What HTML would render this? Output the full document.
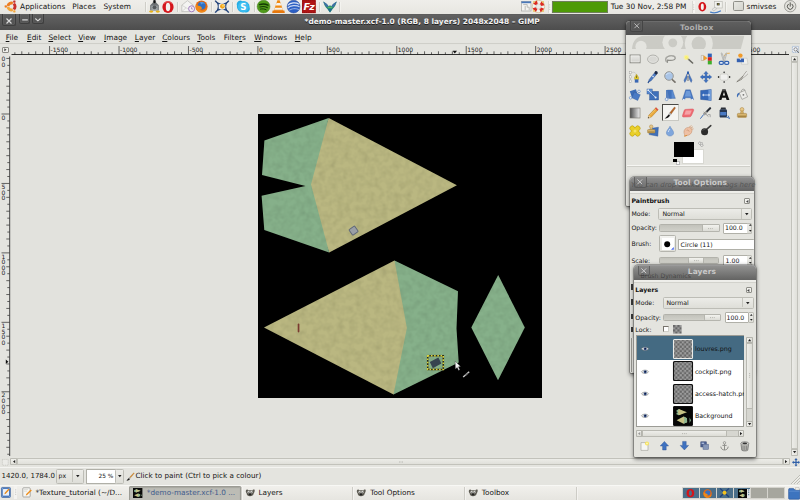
<!DOCTYPE html><html><head><meta charset="utf-8"><title>GIMP</title><style>
*{box-sizing:border-box;margin:0;padding:0}
html,body{width:800px;height:500px;overflow:hidden;background:#e3e3de}
body{font-family:"DejaVu Sans","Liberation Sans",sans-serif;font-size:7.4px;color:#141414;position:relative;line-height:1}
.a{position:absolute}
.t{position:absolute;white-space:pre;line-height:10px;height:10px}
u{text-decoration:underline;text-decoration-thickness:.6px;text-underline-offset:.8px}
svg{position:absolute;overflow:visible}
#panel{left:0;top:0;width:800px;height:14px;background:linear-gradient(#efeeea,#e7e6e1)}
#title{left:0;top:13.4px;width:800px;height:16.6px;background:linear-gradient(#33332f 0,#3a3a3a .8px,#626262 1.6px,#4d4d4d 100%)}
#menubar{left:0;top:30px;width:800px;height:14px;background:#e4e4df;border-bottom:1px solid #cfcfc9}
#canvasbg{left:10px;top:55px;width:780px;height:401px;background:#e2e2dd}
.win{position:absolute;background:#e4e4df;box-shadow:0 1.5px 4px rgba(0,0,0,.6),0 0 0 .5px rgba(60,60,60,.6);border-radius:4px 4px 1px 1px}
.wtitle{position:absolute;left:0;top:0;right:0;background:linear-gradient(#707070,#4c4c4c);border-radius:4px 4px 0 0;border-top:.5px solid #8a8a8a}
.wx{position:absolute;border:.7px solid #3e3e3e;border-radius:2px;background:linear-gradient(#5c5c5c,#535353);box-shadow:inset 0 0 0 .5px rgba(255,255,255,.08)}
.combo{position:absolute;background:linear-gradient(#ecece8,#deded8);border:.6px solid #bdbdb6;border-radius:1.5px}
.entry{position:absolute;background:#fff;border:.6px solid #b0b0a8;border-radius:1px}
.slider{position:absolute;background:linear-gradient(#c2c2bb,#d0d0c9);border:.6px solid #b2b2ab;border-radius:1.5px}
.knob{position:absolute;background:linear-gradient(#f2f2ee,#dcdcd6);border:.6px solid #b5b5ae;border-radius:1.5px}
.chk{background:conic-gradient(#6a6a6a 25%,#9c9c9c 0 50%,#6a6a6a 0 75%,#9c9c9c 0) 0 0/4.4px 4.4px}
</style></head><body>
<div class="a" id="canvasbg"></div>
<svg style="left:0px;top:0px" width="800" height="500" viewBox="0 0 800 500">
<rect x="258" y="114" width="284" height="284" fill="#000"/>
<defs><filter id="tx" x="0" y="0" width="100%" height="100%"><feTurbulence type="fractalNoise" baseFrequency=".16" numOctaves="2" seed="4" result="n"/><feColorMatrix in="n" type="matrix" values="0 0 0 0 0 0 0 0 0 0 0 0 0 0 0 .22 .22 0 0 -.17" result="a"/><feComposite in="a" in2="SourceGraphic" operator="in" result="m"/><feMerge><feMergeNode in="SourceGraphic"/><feMergeNode in="m"/></feMerge></filter></defs><g filter="url(#tx)">
<polygon points="328.7,118 456.9,185.3 329.2,252.6 307,194 307,178" fill="#bab781"/>
<polygon points="328.7,118 264.4,140.6 262,175 305.5,186.1 261.6,195.8 264.3,230 329.2,252.6 311,184.6" fill="#86b08a"/>
<polygon points="394.5,260.5 264,327.5 393.5,394.5 420,360 420,300" fill="#bab781"/>
<polygon points="394.5,260.5 458,291.2 456.5,328.6 458.7,362.5 393.5,394.5 406.9,328" fill="#86b08a"/>
<polygon points="498.2,275 524.8,327.6 498,380.2 471.3,327.6" fill="#86b08a"/>
</g>
<rect x="350.2" y="227.2" width="6.8" height="6.8" rx=".8" fill="#9a9fa6" stroke="#5f6878" stroke-width="1" transform="rotate(-35 353.6 230.6)"/>
<rect x="297.7" y="323.6" width="1.7" height="8.8" rx=".8" fill="#7a3a30"/>
<rect x="427.7" y="355.7" width="15.6" height="13.8" fill="none" stroke="#2a2a18" stroke-width="1.5"/>
<rect x="427.7" y="355.7" width="15.6" height="13.8" fill="none" stroke="#d8d23a" stroke-width="1.5" stroke-dasharray="1.6 1.6"/>
<polygon points="429.8,362 438.4,357.4 441.4,363.6 432.8,368.2" fill="#36434f"/>
<path d="M455.2 361.2L455.4 369L457.2 367.4L458.6 370.4L459.8 369.8L458.4 366.8L460.6 366.6Z" fill="#f4f4f4" stroke="#222" stroke-width=".3"/>
<path d="M463.2 377L469.2 371.8" stroke="#c8c8c8" stroke-width="1.5"/><path d="M465.4 375.2L467.6 373.2" stroke="#777" stroke-width="1.5"/>
</svg>
<div class="a" id="title"></div>
<div class="wx" style="left:2.4px;top:14.3px;width:13.4px;height:11.9px;border-top:none;border-radius:0 0 2.5px 2.5px"></div>
<svg style="left:6px;top:17.9px" width="6" height="6" viewBox="0 0 6 6"><path d="M.5 .5L5.5 5.5M5.5 .5L.5 5.5" stroke="#dcdcdc" stroke-width="1.15" fill="none"/></svg>
<div class="wx" style="left:19.2px;top:14.3px;width:11.3px;height:9.3px;border-top:none;border-radius:0 0 2.5px 2.5px"></div>
<div class="wx" style="left:32.4px;top:14.3px;width:11.9px;height:9.3px;border-top:none;border-radius:0 0 2.5px 2.5px"></div>
<svg style="left:22px;top:18.6px" width="6" height="2" viewBox="0 0 6 2"><path d="M.2 .9H5.8" stroke="#dcdcdc" stroke-width="1.2"/></svg>
<svg style="left:35.4px;top:17.8px" width="6" height="4" viewBox="0 0 6 4"><path d="M.3 .5L2.9 2.8L5.5 .5" stroke="#dcdcdc" stroke-width="1.1" fill="none"/></svg>
<div class="t" style="left:304.5px;top:17.1px;font-size:7.46px;color:#f2f2f2;font-weight:bold;text-shadow:0 .5px 0 #222;">*demo-master.xcf-1.0 (RGB, 8 layers) 2048x2048 – GIMP</div>
<div class="a" id="menubar"></div>
<div class="t" style="left:5.7px;top:32.8px;font-size:7.4px;"><u>F</u>ile</div>
<div class="t" style="left:27.0px;top:32.8px;font-size:7.4px;"><u>E</u>dit</div>
<div class="t" style="left:48.4px;top:32.8px;font-size:7.4px;"><u>S</u>elect</div>
<div class="t" style="left:78.2px;top:32.8px;font-size:7.4px;"><u>V</u>iew</div>
<div class="t" style="left:104.0px;top:32.8px;font-size:7.4px;"><u>I</u>mage</div>
<div class="t" style="left:134.8px;top:32.8px;font-size:7.4px;"><u>L</u>ayer</div>
<div class="t" style="left:162.20000000000002px;top:32.8px;font-size:7.4px;"><u>C</u>olours</div>
<div class="t" style="left:197.20000000000002px;top:32.8px;font-size:7.4px;"><u>T</u>ools</div>
<div class="t" style="left:223.8px;top:32.8px;font-size:7.4px;">Filte<u>r</u>s</div>
<div class="t" style="left:254.20000000000002px;top:32.8px;font-size:7.4px;"><u>W</u>indows</div>
<div class="t" style="left:294.79999999999995px;top:32.8px;font-size:7.4px;"><u>H</u>elp</div>
<div class="a" style="left:0px;top:44.5px;width:800px;height:10.5px;background:#e4e4df"></div>
<div class="a" style="left:0px;top:55px;width:10px;height:401px;background:#e4e4df"></div>
<div class="a" style="left:1.5px;top:46.5px;width:7px;height:6.5px;border:.6px solid #8a8a84;border-radius:1px;background:#eeeeea"></div>
<svg style="left:3.6px;top:48px" width="3" height="4" viewBox="0 0 3 4"><path d="M.3 .3L2.6 1.8L.3 3.3Z" fill="#444"/></svg>
<svg style="left:0px;top:0px" width="800" height="500" viewBox="0 0 800 500"><path d="M11.5 54.5H789" stroke="#1a1a1a" stroke-width=".9"/><path d="M14.86 54.5v-2.2M21.80 54.5v-3.2M28.75 54.5v-2.2M35.69 54.5v-3.2M42.64 54.5v-2.2M49.58 54.5v-8.5M56.52 54.5v-2.2M63.47 54.5v-3.2M70.41 54.5v-2.2M77.36 54.5v-3.2M84.30 54.5v-2.2M91.24 54.5v-3.2M98.19 54.5v-2.2M105.13 54.5v-3.2M112.08 54.5v-2.2M119.02 54.5v-8.5M125.96 54.5v-2.2M132.91 54.5v-3.2M139.85 54.5v-2.2M146.80 54.5v-3.2M153.74 54.5v-2.2M160.68 54.5v-3.2M167.63 54.5v-2.2M174.57 54.5v-3.2M181.52 54.5v-2.2M188.46 54.5v-8.5M195.40 54.5v-2.2M202.35 54.5v-3.2M209.29 54.5v-2.2M216.24 54.5v-3.2M223.18 54.5v-2.2M230.12 54.5v-3.2M237.07 54.5v-2.2M244.01 54.5v-3.2M250.96 54.5v-2.2M257.90 54.5v-8.5M264.84 54.5v-2.2M271.79 54.5v-3.2M278.73 54.5v-2.2M285.68 54.5v-3.2M292.62 54.5v-2.2M299.56 54.5v-3.2M306.51 54.5v-2.2M313.45 54.5v-3.2M320.40 54.5v-2.2M327.34 54.5v-8.5M334.28 54.5v-2.2M341.23 54.5v-3.2M348.17 54.5v-2.2M355.12 54.5v-3.2M362.06 54.5v-2.2M369.00 54.5v-3.2M375.95 54.5v-2.2M382.89 54.5v-3.2M389.84 54.5v-2.2M396.78 54.5v-8.5M403.72 54.5v-2.2M410.67 54.5v-3.2M417.61 54.5v-2.2M424.56 54.5v-3.2M431.50 54.5v-2.2M438.44 54.5v-3.2M445.39 54.5v-2.2M452.33 54.5v-3.2M459.28 54.5v-2.2M466.22 54.5v-8.5M473.16 54.5v-2.2M480.11 54.5v-3.2M487.05 54.5v-2.2M494.00 54.5v-3.2M500.94 54.5v-2.2M507.88 54.5v-3.2M514.83 54.5v-2.2M521.77 54.5v-3.2M528.72 54.5v-2.2M535.66 54.5v-8.5M542.60 54.5v-2.2M549.55 54.5v-3.2M556.49 54.5v-2.2M563.44 54.5v-3.2M570.38 54.5v-2.2M577.32 54.5v-3.2M584.27 54.5v-2.2M591.21 54.5v-3.2M598.16 54.5v-2.2M605.10 54.5v-8.5M612.04 54.5v-2.2M618.99 54.5v-3.2M625.93 54.5v-2.2M632.88 54.5v-3.2M639.82 54.5v-2.2M646.76 54.5v-3.2M653.71 54.5v-2.2M660.65 54.5v-3.2M667.60 54.5v-2.2M674.54 54.5v-8.5M681.48 54.5v-2.2M688.43 54.5v-3.2M695.37 54.5v-2.2M702.32 54.5v-3.2M709.26 54.5v-2.2M716.20 54.5v-3.2M723.15 54.5v-2.2M730.09 54.5v-3.2M737.04 54.5v-2.2M743.98 54.5v-8.5M750.92 54.5v-2.2M757.87 54.5v-3.2M764.81 54.5v-2.2M771.76 54.5v-3.2M778.70 54.5v-2.2M785.64 54.5v-3.2" stroke="#1a1a1a" stroke-width=".65" fill="none"/><text x="50.6" y="51.8" font-size="6" fill="#1a1a1a">-1500</text><text x="120.0" y="51.8" font-size="6" fill="#1a1a1a">-1000</text><text x="189.5" y="51.8" font-size="6" fill="#1a1a1a">-500</text><text x="258.9" y="51.8" font-size="6" fill="#1a1a1a">0</text><text x="328.3" y="51.8" font-size="6" fill="#1a1a1a">500</text><text x="397.8" y="51.8" font-size="6" fill="#1a1a1a">1000</text><text x="467.2" y="51.8" font-size="6" fill="#1a1a1a">1500</text><text x="536.7" y="51.8" font-size="6" fill="#1a1a1a">2000</text><text x="606.1" y="51.8" font-size="6" fill="#1a1a1a">2500</text><text x="675.5" y="51.8" font-size="6" fill="#1a1a1a">3000</text><text x="745.0" y="51.8" font-size="6" fill="#1a1a1a">3500</text><path d="M452.6 50.8h4.4l-2.2 2.6z" fill="#111"/><path d="M9.7 56.5V456" stroke="#1a1a1a" stroke-width=".8"/><path d="M9.5 58.45h-3.2M9.5 65.39h-2.2M9.5 72.34h-3.2M9.5 79.28h-2.2M9.5 86.22h-3.2M9.5 93.17h-2.2M9.5 100.11h-3.2M9.5 107.06h-2.2M9.5 114.00h-8M9.5 120.94h-2.2M9.5 127.89h-3.2M9.5 134.83h-2.2M9.5 141.78h-3.2M9.5 148.72h-2.2M9.5 155.66h-3.2M9.5 162.61h-2.2M9.5 169.55h-3.2M9.5 176.50h-2.2M9.5 183.44h-8M9.5 190.38h-2.2M9.5 197.33h-3.2M9.5 204.27h-2.2M9.5 211.22h-3.2M9.5 218.16h-2.2M9.5 225.10h-3.2M9.5 232.05h-2.2M9.5 238.99h-3.2M9.5 245.94h-2.2M9.5 252.88h-8M9.5 259.82h-2.2M9.5 266.77h-3.2M9.5 273.71h-2.2M9.5 280.66h-3.2M9.5 287.60h-2.2M9.5 294.54h-3.2M9.5 301.49h-2.2M9.5 308.43h-3.2M9.5 315.38h-2.2M9.5 322.32h-8M9.5 329.26h-2.2M9.5 336.21h-3.2M9.5 343.15h-2.2M9.5 350.10h-3.2M9.5 357.04h-2.2M9.5 363.98h-3.2M9.5 370.93h-2.2M9.5 377.87h-3.2M9.5 384.82h-2.2M9.5 391.76h-8M9.5 398.70h-2.2M9.5 405.65h-3.2M9.5 412.59h-2.2M9.5 419.54h-3.2M9.5 426.48h-2.2M9.5 433.42h-3.2M9.5 440.37h-2.2M9.5 447.31h-3.2M9.5 454.26h-2.2" stroke="#1a1a1a" stroke-width=".65" fill="none"/><text x="1.6" y="61.4" font-size="6" fill="#1a1a1a">0</text><text x="1.6" y="67.0" font-size="6" fill="#1a1a1a">0</text><text x="1.6" y="119.6" font-size="6" fill="#1a1a1a">0</text><text x="1.6" y="189.0" font-size="6" fill="#1a1a1a">5</text><text x="1.6" y="194.6" font-size="6" fill="#1a1a1a">0</text><text x="1.6" y="200.2" font-size="6" fill="#1a1a1a">0</text><text x="1.6" y="258.5" font-size="6" fill="#1a1a1a">1</text><text x="1.6" y="264.1" font-size="6" fill="#1a1a1a">0</text><text x="1.6" y="269.7" font-size="6" fill="#1a1a1a">0</text><text x="1.6" y="275.3" font-size="6" fill="#1a1a1a">0</text><text x="1.6" y="327.9" font-size="6" fill="#1a1a1a">1</text><text x="1.6" y="333.5" font-size="6" fill="#1a1a1a">5</text><text x="1.6" y="339.1" font-size="6" fill="#1a1a1a">0</text><text x="1.6" y="344.7" font-size="6" fill="#1a1a1a">0</text><text x="1.6" y="397.4" font-size="6" fill="#1a1a1a">2</text><text x="1.6" y="403.0" font-size="6" fill="#1a1a1a">0</text><text x="1.6" y="408.6" font-size="6" fill="#1a1a1a">0</text><text x="1.6" y="414.2" font-size="6" fill="#1a1a1a">0</text><path d="M5.8 359.6v4.4l2.6-2.2z" fill="#111"/></svg>
<div class="a" id="panel"></div>
<svg style="left:4.5px;top:-0.2px" width="13" height="13" viewBox="0 0 12 12"><path d="M2.72 5.66A3.3 3.3 0 0 1 7.34 2.99" fill="none" stroke="#ee7d22" stroke-width="2.7"/><path d="M7.94 3.33A3.3 3.3 0 0 1 7.94 8.67" fill="none" stroke="#c9302c" stroke-width="2.7"/><path d="M7.34 9.01A3.3 3.3 0 0 1 2.72 6.34" fill="none" stroke="#f3a63c" stroke-width="2.7"/><circle cx="0.80" cy="6.00" r="1.3" fill="#ee7d22" stroke="#edece8" stroke-width=".35"/><circle cx="8.60" cy="1.50" r="1.3" fill="#c9302c" stroke="#edece8" stroke-width=".35"/><circle cx="8.60" cy="10.50" r="1.3" fill="#f3a63c" stroke="#edece8" stroke-width=".35"/></svg>
<div class="t" style="left:20.1px;top:2px;font-size:7.4px;">Applications</div>
<div class="t" style="left:72.3px;top:2px;font-size:7.4px;">Places</div>
<div class="t" style="left:103.4px;top:2px;font-size:7.4px;">System</div>
<div class="a" style="left:144.5px;top:1.5px;width:1px;height:10.5px;background:#cfcec8;box-shadow:.6px 0 0 #f8f8f5"></div>
<div class="a" style="left:177.3px;top:1.5px;width:1px;height:10.5px;background:#cfcec8;box-shadow:.6px 0 0 #f8f8f5"></div>
<div class="a" style="left:210.5px;top:1.5px;width:1px;height:10.5px;background:#cfcec8;box-shadow:.6px 0 0 #f8f8f5"></div>
<div class="a" style="left:231.8px;top:1.5px;width:1px;height:10.5px;background:#cfcec8;box-shadow:.6px 0 0 #f8f8f5"></div>
<div class="a" style="left:253.5px;top:1.5px;width:1px;height:10.5px;background:#cfcec8;box-shadow:.6px 0 0 #f8f8f5"></div>
<div class="a" style="left:319.2px;top:1.5px;width:1px;height:10.5px;background:#cfcec8;box-shadow:.6px 0 0 #f8f8f5"></div>
<div class="a" style="left:339.3px;top:1.5px;width:1px;height:10.5px;background:#cfcec8;box-shadow:.6px 0 0 #f8f8f5"></div>
<svg style="left:147.5px;top:0px" width="13" height="13" viewBox="0 0 13 13"><path d="M6.5 0C5.2 0 4.8 1.3 4.9 2.6L2.2 5.2V10.5H10.8V5.2L8.1 2.6C8.2 1.3 7.8 0 6.5 0Z" fill="#6d7275"/>
<path d="M3.2 5.6H9.8V10H3.2Z" fill="#9da3a5"/><circle cx="6.5" cy="7.3" r="1.9" fill="#54595c"/>
<path d="M5.6 0.2h1.8v3h-1.8z" fill="#111"/>
<ellipse cx="3.2" cy="11.6" rx="2.1" ry="1.1" fill="#e8b21a"/><ellipse cx="9.8" cy="11.6" rx="2.1" ry="1.1" fill="#e8b21a"/></svg>
<svg style="left:162.3px;top:0.6px" width="12" height="12" viewBox="0 0 12 12"><ellipse cx="6" cy="6" rx="5.6" ry="5.9" fill="#d4151b"/><ellipse cx="6" cy="6" rx="2.2" ry="4.3" fill="#f3f1ee"/><path d="M2 2.5A5.6 5.9 0 0 1 10 2.5" stroke="#ee6a6a" stroke-width=".8" fill="none"/></svg>
<svg style="left:181px;top:0.3px" width="15" height="13" viewBox="0 0 15 13"><path d="M.8 5.2L6.5 .6L12.2 5.2V11.6H.8Z" fill="#f4f4f2" stroke="#b9b9b5" stroke-width=".7"/>
<path d="M.8 5.2L6.5 8.6L12.2 5.2M.8 11.6L5 7.8M12.2 11.6L8 7.8" stroke="#c5c5c0" stroke-width=".6" fill="none"/>
<circle cx="10.6" cy="8.8" r="3" fill="#f3eef6" stroke="#a27fc0" stroke-width="1"/><path d="M10.6 7.2v1.8h1.2" stroke="#7e5d9e" stroke-width=".6" fill="none"/></svg>
<svg style="left:195.4px;top:0.4px" width="13" height="13" viewBox="0 0 13 13"><circle cx="6.5" cy="6.5" r="6.1" fill="#e66a12"/><circle cx="6.7" cy="5.6" r="3.9" fill="#2f6fc2"/>
<path d="M1 4C2.5 6.5 4 5 6 6.8C7.8 8.4 6.5 10 4.5 9.3C6 11.5 10 11 11.6 8C12.8 10 10 12.6 6.5 12.6C2.5 12.6 0 9 1 4Z" fill="#f08a1a"/>
<path d="M5 2.5C6.5 1.5 9 2 10 4C8.5 3.2 7 3.5 6.5 4.5Z" fill="#5a9ae0"/></svg>
<svg style="left:214px;top:0px" width="16" height="13" viewBox="0 0 16 13"><path d="M1.2 .6C3 3 5 4.2 8 4.2S13 3 14.8 .6M1.2 12.6C3 10.2 5 9 8 9S13 10.2 14.8 12.6" stroke="#24457c" stroke-width="1.5" fill="none"/>
<path d="M3.4 3C4.6 5 4.6 8 3.4 10.2M12.6 3C11.4 5 11.4 8 12.6 10.2" stroke="#24457c" stroke-width="1.3" fill="none"/>
<circle cx="8" cy="6.5" r="3.3" fill="#f7f6f2"/><circle cx="8.4" cy="6.3" r="2.4" fill="#f2a51c"/><circle cx="9" cy="5.8" r="1.1" fill="#f9d25a"/></svg>
<svg style="left:236px;top:0px" width="14.5" height="13.5" viewBox="0 0 14.5 13.5"><path d="M4.3 .6A3.7 3.7 0 0 0 1 5.6A6 6 0 0 0 8.6 12.2A3.7 3.7 0 0 0 13.6 7.6A6 6 0 0 0 6.4 1.2A3.7 3.7 0 0 0 4.3 .6Z" fill="#27aee5"/>
<circle cx="7.3" cy="6.7" r="5.4" fill="#3dbdf0"/>
<text x="7.3" y="9.8" font-size="8.6" font-weight="bold" fill="#fff" text-anchor="middle">S</text></svg>
<svg style="left:257.2px;top:0px" width="13.2" height="13.2" viewBox="0 0 13.2 13.2"><circle cx="6.6" cy="6.6" r="6.4" fill="#4f9a1a"/><circle cx="6.6" cy="6.6" r="6.4" fill="none" stroke="#3b7a10" stroke-width=".5"/>
<path d="M2.6 4.6C5.4 3.6 8.6 3.8 11 5.2" stroke="#143a05" stroke-width="1.5" fill="none" stroke-linecap="round"/>
<path d="M3 7C5.4 6.2 8 6.4 10.2 7.6" stroke="#143a05" stroke-width="1.2" fill="none" stroke-linecap="round"/>
<path d="M3.5 9.1C5.4 8.6 7.4 8.8 9.2 9.8" stroke="#143a05" stroke-width="1" fill="none" stroke-linecap="round"/></svg>
<svg style="left:272.4px;top:0px" width="13" height="13.4" viewBox="0 0 13 13.4"><path d="M6.5 .3L7.6 .3L11.2 10.8H1.8L5.4 .3Z" fill="#f08a12"/>
<path d="M4.55 3H8.45L9.35 5.6H3.65Z" fill="#f6f3ee"/><path d="M2.9 7.8H10.1L10.8 9.8H2.2Z" fill="#f6f3ee"/>
<path d="M.6 10.4H12.4L12.8 13H.2Z" fill="#e8780c"/></svg>
<svg style="left:286.8px;top:0px" width="13.2" height="13.2" viewBox="0 0 13.2 13.2"><circle cx="6.6" cy="6.6" r="6.4" fill="#2b5fc4"/>
<path d="M.6 5.4C3.5 2.6 8.5 2 12.4 4.2" stroke="#dfe8f8" stroke-width="1.3" fill="none"/>
<path d="M.4 8.2C3.5 5.4 9 4.8 12.9 7" stroke="#c5d4f0" stroke-width="1.2" fill="none"/>
<path d="M1.6 10.8C4.4 8.4 9 8 12.2 9.8" stroke="#9db6e6" stroke-width="1" fill="none"/>
<circle cx="6.6" cy="6.6" r="6.4" fill="none" stroke="#1c3f91" stroke-width=".5"/></svg>
<svg style="left:302px;top:0px" width="14" height="13.4" viewBox="0 0 14 13.4"><rect x="0" y="0" width="13.8" height="13.2" fill="#b01616"/><rect x=".7" y=".7" width="12.4" height="11.8" fill="none" stroke="#7a0c0c" stroke-width=".6" stroke-dasharray="1 .8"/>
<text x="6.9" y="10.4" font-size="9.5" font-weight="bold" font-style="italic" fill="#fff" text-anchor="middle" letter-spacing="-.6">Fz</text></svg>
<svg style="left:322.6px;top:1px" width="14" height="12" viewBox="0 0 14 12"><path d="M.3 .6C2.2 1.6 4.4 3.4 5.6 5.2L7 4.2L8.4 5.2C9.6 3.4 11.8 1.6 13.7 .6C13.2 3.4 11.6 6.4 9.6 8L7 11.6L4.4 8C2.4 6.4 .8 3.4 .3 .6Z" fill="#2a8a72"/>
<path d="M.3 .6C2.2 1.6 4.4 3.4 5.6 5.2L4 6.2C2.6 5 1 2.8 .3 .6ZM13.7 .6C11.8 1.6 9.6 3.4 8.4 5.2L10 6.2C11.4 5 13 2.8 13.7 .6Z" fill="#3f6ea8"/>
<path d="M4.4 7.4H9.6L7 11.6Z" fill="#1f6d8a"/><path d="M4.8 5.8H9.2V7.2H4.8Z" fill="#57b56a"/></svg>
<svg style="left:521px;top:1.2px" width="10.5" height="10.5" viewBox="0 0 10.5 10.5"><rect x=".4" y=".4" width="9.6" height="9.6" fill="#f3f3f0" stroke="#a9a9a4" stroke-width=".7"/><rect x=".4" y=".4" width="9.6" height="1.8" fill="#4a78b8"/>
<path d="M2.2 3.6H6.2V6.2H8.2V9.2M4.2 5V9.2" stroke="#b5b5b0" stroke-width=".9" fill="none"/></svg>
<svg style="left:532.4px;top:0.1px" width="13" height="13" viewBox="0 0 13 13"><circle cx="6.5" cy="6.5" r="4.4" fill="none" stroke="#f2f0ec" stroke-width="3.4"/>
<circle cx="6.5" cy="6.5" r="4.4" fill="none" stroke="#dd2a22" stroke-width="3.4" stroke-dasharray="3.456 3.456" stroke-dashoffset="-1.728"/>
<circle cx="6.5" cy="6.5" r="6.2" fill="none" stroke="#c9a86a" stroke-width=".5"/><circle cx="6.5" cy="6.5" r="2.6" fill="none" stroke="#b9b9b4" stroke-width=".4"/>
<circle cx="2" cy="2" r="1.1" fill="#e9c46a"/><circle cx="11" cy="2" r="1.1" fill="#e9c46a"/><circle cx="2" cy="11" r="1.1" fill="#e9c46a"/><circle cx="11" cy="11" r="1.1" fill="#e9c46a"/></svg>
<div class="a" style="left:547.6px;top:0.5px;width:3.6px;height:12.5px;background:#f6f5f2;border-left:.5px solid #d9d8d3"></div>
<svg style="left:548.8px;top:3.5px" width="1.5" height="7" viewBox="0 0 1.5 7"><path d="M.7 .5v.8M.7 2.7v.8M.7 4.9v.8" stroke="#a8a8a2" stroke-width=".8"/></svg>
<div class="a" style="left:551.8px;top:0.7px;width:56px;height:12.2px;background:#4e9a06;border:.7px solid #6f7f5a"></div>
<div class="t" style="left:610.8px;top:2px;font-size:7.4px;">Tue 30 Nov, 2:58 PM</div>
<div class="a" style="left:691.6px;top:0.5px;width:3.6px;height:12.5px;background:#f6f5f2;border-left:.5px solid #d9d8d3"></div>
<svg style="left:692.8px;top:3.5px" width="1.5" height="7" viewBox="0 0 1.5 7"><path d="M.7 .5v.8M.7 2.7v.8M.7 4.9v.8" stroke="#a8a8a2" stroke-width=".8"/></svg>
<svg style="left:698px;top:2px" width="9" height="10" viewBox="0 0 9 10"><ellipse cx="4.3" cy="4.8" rx="3.9" ry="4.7" fill="#d4151b"/><ellipse cx="4.3" cy="4.8" rx="1.5" ry="3.3" fill="#f6f4f1"/></svg>
<svg style="left:709.5px;top:0.5px" width="13.5" height="12.5" viewBox="0 0 13.5 12.5"><rect x="4.6" y=".4" width="7.6" height="6.6" fill="#f2f2ee" stroke="#b4b4ae" stroke-width=".6"/><rect x="6.8" y="2" width="2.8" height="2.4" fill="#3a3a32"/><circle cx="8.2" cy="3.1" r=".6" fill="#d8c63a"/>
<path d="M2.2 8.2L5.2 6.2L6.6 8L3.6 10Z" fill="#e9e9e5" stroke="#aaa" stroke-width=".5"/>
<path d="M.6 11.2C3.5 12.4 7.5 11.6 10.4 10" stroke="#4a80c6" stroke-width="1.4" fill="none" stroke-linecap="round"/></svg>
<div class="a" style="left:724.6px;top:1.5px;width:1px;height:10.5px;background:#cfcec8;box-shadow:.6px 0 0 #f8f8f5"></div>
<div class="a" style="left:733.2px;top:1.4px;width:10.6px;height:10px;background:linear-gradient(135deg,#e8e8e3,#d4d4ce);border:.8px solid #8f8f89;border-radius:1.6px"></div>
<div class="t" style="left:746.6px;top:2px;font-size:7.4px;">smivses</div>
<svg style="left:783.8px;top:0.3px" width="12.4" height="12.4" viewBox="0 0 12.4 12.4"><circle cx="6.2" cy="6.2" r="5.7" fill="#e3e2dd" stroke="#8c8c86" stroke-width=".8"/>
<path d="M4.3 4.2A2.9 2.9 0 1 0 8.1 4.2" stroke="#55554f" stroke-width="1" fill="none" stroke-linecap="round"/><path d="M6.2 2.8V6.2" stroke="#55554f" stroke-width="1" stroke-linecap="round"/></svg>
<div class="a" style="left:790px;top:55px;width:10px;height:401.5px;background:#e4e4df"></div>
<div class="a" style="left:791px;top:55.5px;width:7px;height:400px;background:#dededa;border:.6px solid #c2c2bb;border-radius:1px"></div>
<div class="a" style="left:791px;top:55.5px;width:7px;height:6.8px;background:linear-gradient(90deg,#f0f0ec,#e2e2dc);border:.6px solid #bcbcb5;border-radius:1px"></div>
<div class="a" style="left:791px;top:448.8px;width:7px;height:6.8px;background:linear-gradient(90deg,#f0f0ec,#e2e2dc);border:.6px solid #bcbcb5;border-radius:1px"></div>
<div class="a" style="left:791px;top:62.3px;width:7px;height:386.5px;background:linear-gradient(90deg,#ecece8,#e0e0da);border:.6px solid #c2c2bb;border-radius:1px"></div>
<svg style="left:792.9px;top:57.8px" width="3.2" height="2.4" viewBox="0 0 3.2 2.4"><path d="M0 2.2L1.6 0L3.2 2.2Z" fill="#222"/></svg>
<svg style="left:792.9px;top:451.2px" width="3.2" height="2.4" viewBox="0 0 3.2 2.4"><path d="M0 0L1.6 2.2L3.2 0Z" fill="#222"/></svg>
<svg style="left:791.5px;top:46px" width="7.5" height="7.5" viewBox="0 0 7.5 7.5"><rect x=".4" y=".4" width="6" height="6" fill="#f0f3f8" stroke="#7f9cc4" stroke-width=".7" stroke-dasharray="1.2 .8"/><circle cx="3.6" cy="3.4" r="1.7" fill="none" stroke="#555" stroke-width=".6"/><path d="M4.8 4.6L6.8 6.8" stroke="#555" stroke-width=".9"/></svg>
<div class="a" style="left:0px;top:456.5px;width:800px;height:10.5px;background:#e4e4df"></div>
<div class="a" style="left:10.4px;top:458.4px;width:779.2px;height:6.8px;background:#dededa;border:.6px solid #c2c2bb;border-radius:1px"></div>
<div class="a" style="left:10.4px;top:458.4px;width:7px;height:6.8px;background:linear-gradient(#f0f0ec,#e2e2dc);border:.6px solid #bcbcb5;border-radius:1px"></div>
<div class="a" style="left:782.6px;top:458.4px;width:7px;height:6.8px;background:linear-gradient(#f0f0ec,#e2e2dc);border:.6px solid #bcbcb5;border-radius:1px"></div>
<div class="a" style="left:17.4px;top:458.4px;width:765.2px;height:6.8px;background:linear-gradient(#ecece8,#e0e0da);border:.6px solid #c2c2bb;border-radius:1px"></div>
<svg style="left:12.8px;top:460.4px" width="2.4" height="3.2" viewBox="0 0 2.4 3.2"><path d="M2.2 0L0 1.6L2.2 3.2Z" fill="#222"/></svg>
<svg style="left:784.8px;top:460.4px" width="2.4" height="3.2" viewBox="0 0 2.4 3.2"><path d="M0 0L2.2 1.6L0 3.2Z" fill="#222"/></svg>
<svg style="left:399px;top:461px" width="4" height="2" viewBox="0 0 4 2"><path d="M0 1h.8M1.6 1h.8M3.2 1h.8" stroke="#9a9a94" stroke-width=".7"/></svg>
<svg style="left:1.6px;top:458.6px" width="7" height="7" viewBox="0 0 7 7"><rect x=".4" y=".4" width="5.8" height="5.8" fill="#ebebe7" stroke="#b9b9b3" stroke-width=".7" stroke-dasharray="1 1"/></svg>
<svg style="left:791.6px;top:457.6px" width="8" height="8.6" viewBox="0 0 8 8.6"><path d="M4 0L5.6 1.9H4.6V3.7H6.3V2.7L8 4.3L6.3 5.9V4.9H4.6V6.7H5.6L4 8.6L2.4 6.7H3.4V4.9H1.7V5.9L0 4.3L1.7 2.7V3.7H3.4V1.9H2.4Z" fill="#2f5fa8"/></svg>
<div class="a" style="left:0px;top:467px;width:800px;height:18px;background:#e4e4df;border-top:.6px solid #f4f4f1"></div>
<div class="t" style="left:1.5px;top:471.2px;font-size:7px;">1420.0, 1784.0</div>
<div class="combo" style="left:55.8px;top:468.6px;width:28.4px;height:15px"></div>
<div class="t" style="left:58.6px;top:471.2px;font-size:6.2px;">px</div>
<div class="a" style="left:71.6px;top:470px;width:0.6px;height:12px;background:#c4c4bd"></div>
<svg style="left:76px;top:475px" width="3.6" height="2.4" viewBox="0 0 3.6 2.4"><path d="M0 0L1.8 2.2L3.6 0Z" fill="#222"/></svg>
<div class="entry" style="left:85.6px;top:468.6px;width:30px;height:15px;border-right:none"></div>
<div class="combo" style="left:114.8px;top:468.6px;width:9.2px;height:15px"></div>
<div class="t" style="left:98.6px;top:471.3px;font-size:5.8px;">25 %</div>
<svg style="left:117.6px;top:475px" width="3.6" height="2.4" viewBox="0 0 3.6 2.4"><path d="M0 0L1.8 2.2L3.6 0Z" fill="#222"/></svg>
<svg style="left:126px;top:471.5px" width="9" height="9" viewBox="0 0 9 9"><path d="M7.8 .4L8.6 1.2L4.6 6L3.6 5Z" fill="#c98a3c"/><path d="M3.6 5L4.6 6L3.8 7.2L2.4 6.2Z" fill="#9a9a9a"/><path d="M2.4 6.2L3.8 7.2C3.2 8.4 1.6 8.8 .3 8.6C1.2 8 1.6 7 2.4 6.2Z" fill="#1a1a1a"/></svg>
<div class="t" style="left:135.6px;top:471.2px;font-size:7.2px;">Click to paint (Ctrl to pick a colour)</div>
<svg style="left:790px;top:474px" width="10" height="10" viewBox="0 0 10 10"><path d="M1 10L10 1M4 10L10 4M7 10L10 7" stroke="#b2b2ab" stroke-width=".8"/><path d="M2 10L10 2M5 10L10 5M8 10L10 8" stroke="#f7f7f4" stroke-width=".6"/></svg>
<div class="a" style="left:0px;top:484.8px;width:800px;height:15.2px;background:linear-gradient(#f1f0ec,#e6e5e0);border-top:.6px solid #f8f8f5"></div>
<svg style="left:1.4px;top:487px" width="10" height="11" viewBox="0 0 10 11"><rect x=".4" y=".4" width="9" height="10" rx="1" fill="#4c7cc0" stroke="#2f5796" stroke-width=".6"/><rect x="1.8" y="2" width="6.2" height="6.6" fill="#e9eef6"/><path d="M7.6 1.6L8.6 2.6L4.8 6.8L3.4 7.2L3.8 5.8Z" fill="#e58a1c"/><path d="M.4 .4L2.4 2.4M9.4 .4L7.6 2.2M.4 10.4L2.2 8.6M9.4 10.4L7.6 8.6" stroke="#9dbbe6" stroke-width=".6"/></svg>
<div class="a" style="left:13.8px;top:486px;width:3px;height:13px;background:#f4f3f0"></div>
<svg style="left:14.8px;top:489px" width="1.5" height="7" viewBox="0 0 1.5 7"><path d="M.7 .5v.8M.7 2.7v.8M.7 4.9v.8" stroke="#a8a8a2" stroke-width=".8"/></svg>
<div class="a" style="left:129.2px;top:486.4px;width:111.4px;height:13.6px;background:#bcbcb5;border:.6px solid #9c9c95;border-bottom:none;border-radius:1.5px 1.5px 0 0;box-shadow:inset 0 1px 1px rgba(0,0,0,.12)"></div>
<div class="a" style="left:240.8px;top:487px;width:0.6px;height:13px;background:#cdccc6;box-shadow:.6px 0 0 #faf9f7"></div>
<div class="a" style="left:352.4px;top:487px;width:0.6px;height:13px;background:#cdccc6;box-shadow:.6px 0 0 #faf9f7"></div>
<div class="a" style="left:464px;top:487px;width:0.6px;height:13px;background:#cdccc6;box-shadow:.6px 0 0 #faf9f7"></div>
<div class="a" style="left:575.8px;top:487px;width:0.6px;height:13px;background:#cdccc6;box-shadow:.6px 0 0 #faf9f7"></div>
<svg style="left:22px;top:487.4px" width="10" height="10.6" viewBox="0 0 10 10.6"><rect x=".8" y=".8" width="7.4" height="9.2" rx=".8" fill="#f6f6f3" stroke="#8d8d88" stroke-width=".7"/><path d="M8.8 2.4L9.8 3.4L5.2 8L3.8 8.4L4.2 7Z" fill="#ee8f1e"/><path d="M2 2.6H6M2 4.2H5" stroke="#c4c4be" stroke-width=".5"/></svg>
<div class="t" style="left:35.4px;top:487.8px;font-size:7.3px;">*Texture_tutorial (~/D...</div>
<svg style="left:133px;top:487.8px" width="9.4" height="10" viewBox="0 0 9.4 10"><rect width="9.4" height="10" fill="#0a0a0a"/><path d="M1 2.4L3 1.2L7.6 2.8L3 4.4L1 3.6Z" fill="#8bb591"/><path d="M3 1.2L7.6 2.8L3 4.4Z" fill="#c5c184"/><path d="M1.2 7.2L5 5.4L7 6.4V8L5 9Z" fill="#c5c184"/><path d="M5 5.4L7 6.4V8L5 9L5.4 7.2ZM7.8 6L8.8 7.2L7.8 8.6Z" fill="#8bb591"/></svg>
<div class="t" style="left:146.8px;top:487.8px;font-size:7.3px;color:#3f5b8c;">*demo-master.xcf-1.0 ...</div>
<svg style="left:244.6px;top:487.6px" width="10" height="9" viewBox="0 0 10 9"><path d="M1 2.2C1.6 1.2 3 1.6 3.6 2.6C4.8 2.2 6.2 2.2 7.2 2.8C7.6 1.6 9 1 9.6 1.8C10 3 9.4 4.4 8.8 5.2C8.6 7 7 8.2 5 8.2C3 8.2 1.6 7 1.6 5.2C.8 4.4 .6 3.2 1 2.2Z" fill="#5c5a52"/>
<circle cx="3.6" cy="4.2" r="1.15" fill="#f4f4f0"/><circle cx="6.4" cy="4.2" r="1.15" fill="#f4f4f0"/><circle cx="3.8" cy="4.3" r=".5" fill="#111"/><circle cx="6.2" cy="4.3" r=".5" fill="#111"/>
<ellipse cx="5" cy="6.4" rx="1.3" ry=".9" fill="#222"/></svg>
<div class="t" style="left:258.4px;top:487.8px;font-size:7.3px;">Layers</div>
<svg style="left:356.4px;top:487.6px" width="10" height="9" viewBox="0 0 10 9"><path d="M1 2.2C1.6 1.2 3 1.6 3.6 2.6C4.8 2.2 6.2 2.2 7.2 2.8C7.6 1.6 9 1 9.6 1.8C10 3 9.4 4.4 8.8 5.2C8.6 7 7 8.2 5 8.2C3 8.2 1.6 7 1.6 5.2C.8 4.4 .6 3.2 1 2.2Z" fill="#5c5a52"/>
<circle cx="3.6" cy="4.2" r="1.15" fill="#f4f4f0"/><circle cx="6.4" cy="4.2" r="1.15" fill="#f4f4f0"/><circle cx="3.8" cy="4.3" r=".5" fill="#111"/><circle cx="6.2" cy="4.3" r=".5" fill="#111"/>
<ellipse cx="5" cy="6.4" rx="1.3" ry=".9" fill="#222"/></svg>
<div class="t" style="left:370.2px;top:487.8px;font-size:7.3px;">Tool Options</div>
<svg style="left:468px;top:487.6px" width="10" height="9" viewBox="0 0 10 9"><path d="M1 2.2C1.6 1.2 3 1.6 3.6 2.6C4.8 2.2 6.2 2.2 7.2 2.8C7.6 1.6 9 1 9.6 1.8C10 3 9.4 4.4 8.8 5.2C8.6 7 7 8.2 5 8.2C3 8.2 1.6 7 1.6 5.2C.8 4.4 .6 3.2 1 2.2Z" fill="#5c5a52"/>
<circle cx="3.6" cy="4.2" r="1.15" fill="#f4f4f0"/><circle cx="6.4" cy="4.2" r="1.15" fill="#f4f4f0"/><circle cx="3.8" cy="4.3" r=".5" fill="#111"/><circle cx="6.2" cy="4.3" r=".5" fill="#111"/>
<ellipse cx="5" cy="6.4" rx="1.3" ry=".9" fill="#222"/></svg>
<div class="t" style="left:481.8px;top:487.8px;font-size:7.3px;">Toolbox</div>
<div class="a" style="left:682.4px;top:487.4px;width:102.4px;height:11.6px;background:#d4d3cd"></div>
<div class="a" style="left:683.3px;top:488.2px;width:15.6px;height:9.8px;background:#4a6e88"></div>
<div class="a" style="left:700px;top:488.2px;width:15.6px;height:9.8px;background:#4a6e88"></div>
<div class="a" style="left:717.2px;top:488.2px;width:15.6px;height:9.8px;background:#4a6e88"></div>
<div class="a" style="left:734px;top:488.2px;width:15.6px;height:9.8px;background:#4a6e88"></div>
<div class="a" style="left:751.4px;top:488.2px;width:15.6px;height:9.8px;background:#a6a69e"></div>
<div class="a" style="left:768.4px;top:488.2px;width:15.6px;height:9.8px;background:#a6a69e"></div>
<svg style="left:686.4px;top:489px" width="9" height="8.6" viewBox="0 0 9 8.6"><ellipse cx="4.4" cy="4.2" rx="3.8" ry="4.1" fill="#d4151b"/><ellipse cx="4.4" cy="4.2" rx="1.5" ry="2.9" fill="#4a6e88"/></svg>
<svg style="left:703.4px;top:488.6px" width="9" height="9" viewBox="0 0 9 9"><circle cx="4.5" cy="4.5" r="4.3" fill="#e66a12"/><circle cx="4.8" cy="3.8" r="2.6" fill="#3a6fc0"/><path d="M.8 3C2 5 3.6 4 4.6 5.4C5.2 6.6 4 7 3 6.6C4.4 8.4 7.4 7.6 8.2 5.4C9 7.2 7 8.8 4.5 8.8C1.6 8.8 0 6 .8 3Z" fill="#f08a1a"/></svg>
<svg style="left:718.4px;top:488.4px" width="13" height="9.4" viewBox="0 0 13 9.4"><path d="M2 .4L6.5 4.7L11 .4M2 9L6.5 4.7L11 9" stroke="#1f3f7c" stroke-width="1.3" fill="none"/><circle cx="6.5" cy="4.7" r="2" fill="#f5c31c"/></svg>
<div class="a" style="left:738px;top:488.6px;width:9.4px;height:9px;background:#060606"></div>
<svg style="left:738px;top:488.6px" width="9.4" height="9" viewBox="0 0 9.4 9"><path d="M1 1.6L3 .8L6.6 2.2L3 3.6L1 3Z" fill="#8bb591"/><path d="M3 .8L6.6 2.2L3 3.6Z" fill="#c5c184"/><path d="M1.2 6.4L4.8 4.8L6.4 5.6V7.2L4.8 8.2Z" fill="#c5c184"/><path d="M4.8 4.8L6.4 5.6V7.2L4.8 8.2L5.2 6.4Z" fill="#8bb591"/></svg>
<div class="a" style="left:747.4px;top:488.6px;width:2.2px;height:9px;background:#dfe3e6"></div>
<svg style="left:747.8px;top:489.4px" width="1.4" height="7" viewBox="0 0 1.4 7"><path d="M.7 .3v1.4M.7 2.6v1.4M.7 4.9v1.4" stroke="#4a6e88" stroke-width=".9"/></svg>
<svg style="left:788px;top:486.6px" width="12" height="12.6" viewBox="0 0 12 12.6"><path d="M.6 2.6C.6 1.8 1 1.4 1.8 1.4H5.4L6.4 2.6H10.8C11.4 2.6 11.8 3 11.8 3.6V11.2C11.8 11.8 11.4 12.2 10.8 12.2H1.6C1 12.2 .6 11.8 .6 11.2Z" fill="#3d74bf" stroke="#2a559a" stroke-width=".6"/><path d="M7.4 .6H11L11.6 3H7.4Z" fill="#f2f2ee" stroke="#9a9a94" stroke-width=".4"/><path d="M.9 4.2H11.5" stroke="#6f9bd8" stroke-width=".6"/></svg>
<div class="win" style="left:626px;top:20.6px;width:124.5px;height:185.4px">
<div class="wtitle" style="height:14px;background:linear-gradient(#5f5f5f,#4f4f4f);border-top:.6px solid #6c6c6c"></div>
<div class="wx" style="left:3.6px;top:.4px;width:13.4px;height:10.6px;border-top:none;border-radius:0 0 2.5px 2.5px;border-color:#454545;background:linear-gradient(#5a5a5a,#535353)"></div>
</div>
<svg style="left:633.5px;top:23.3px" width="5.6" height="5.6" viewBox="0 0 5.6 5.6"><path d="M.4 .4L5.2 5.2M5.2 .4L.4 5.2" stroke="#bdbdbd" stroke-width=".95" fill="none"/></svg>
<div class="t" style="left:680px;top:22.6px;font-size:7.5px;color:#aeaeae;font-weight:bold;letter-spacing:.15px;">Toolbox</div>
<svg style="left:0px;top:0px" width="800" height="500" viewBox="0 0 800 500"><defs><clipPath id="hc"><rect x="627" y="35.6" width="123" height="13.4"/></clipPath></defs>
<g clip-path="url(#hc)"><path d="M632 50C632 41 637 35.6 646 35.6L744.4 35.6L740.8 49.2Z" fill="#cbcbc5"/>
<circle cx="641" cy="46.4" r="5.6" fill="#e4e4df"/>
<path d="M647 36C653 36 656 44 662 50H668V35Z" fill="#cbcbc5"/>
<circle cx="672.8" cy="42.3" r="10.4" fill="#e4e4df"/><circle cx="672.8" cy="42.8" r="4.4" fill="#cbcbc5"/>
<circle cx="698.8" cy="43.6" r="14" fill="#e4e4df"/><circle cx="698.8" cy="43.8" r="7.2" fill="#cbcbc5"/></g></svg>
<div class="a" style="left:662px;top:104.2px;width:16.8px;height:16.4px;background:#f4f4f1;border:.9px solid #4a4a46;border-right-color:#c9c9c3;border-bottom-color:#c9c9c3"></div>
<svg style="left:628px;top:52.2px" width="14" height="14" viewBox="0 0 14 14"><defs><linearGradient id="gr" x1="0" y1="0" x2="0" y2="1"><stop offset="0" stop-color="#e9e9e6"/><stop offset="1" stop-color="#cfcfcb"/></linearGradient></defs><rect x="2.1" y="3" width="10" height="7.8" fill="url(#gr)" stroke="#85857f" stroke-width=".9"/><rect x="3" y="3.9" width="8.2" height="6" fill="none" stroke="#f6f6f3" stroke-width=".5"/></svg>
<svg style="left:645.6px;top:52.2px" width="14" height="14" viewBox="0 0 14 14"><ellipse cx="7" cy="7.2" rx="5.3" ry="4.1" fill="#d8d8d4" stroke="#9a9a96" stroke-width=".8"/><ellipse cx="7" cy="7.2" rx="4.4" ry="3.2" fill="none" stroke="#f2f2ef" stroke-width=".5"/></svg>
<svg style="left:663.4px;top:52.2px" width="14" height="14" viewBox="0 0 14 14"><path d="M3.4 9.6C1.6 7.4 3 4.4 6.6 3.8C10 3.2 12.6 4.6 12.2 6.4C11.8 8 8 8.6 4.6 8.2L4.2 10.8" fill="none" stroke="#8f8f8a" stroke-width="1.3"/><path d="M3.4 9.6C1.6 7.4 3 4.4 6.6 3.8C10 3.2 12.6 4.6 12.2 6.4" fill="none" stroke="#c9c9c4" stroke-width=".5"/></svg>
<svg style="left:681.2px;top:52.2px" width="14" height="14" viewBox="0 0 14 14"><path d="M6.2 6.2L11.6 11" stroke="#6a6a64" stroke-width="1.6" stroke-linecap="round"/><circle cx="5.4" cy="5.4" r="2.7" fill="#f7ef9a" opacity=".8"/><circle cx="5.4" cy="5.4" r="1.4" fill="#fbf36a"/></svg>
<svg style="left:699px;top:52.2px" width="14" height="14" viewBox="0 0 14 14"><rect x="8.8" y="1.6" width="4" height="3.6" fill="#2f62b8"/><rect x="8.8" y="5.2" width="4" height="3.6" fill="#d62222"/><rect x="8.8" y="8.8" width="4" height="3.6" fill="#3fae2a"/><path d="M2.4 3.6H5L8.6 6.2L5 8.4H2.4Z" fill="#f2a02a"/><path d="M2.2 3.4H4.4V8.4H2.2Z" fill="#ecece8" stroke="#999" stroke-width=".4"/></svg>
<svg style="left:716.8px;top:52.2px" width="14" height="14" viewBox="0 0 14 14"><path d="M7.6 4C7.8 1.8 9.4 1.2 12.8 1.2" stroke="#f0a22a" stroke-width=".8" fill="none"/><path d="M4.2 1.6C3.8 1 4.8 .6 5.2 1.4L8 9L6.6 9.4Z" fill="#e2e2e0" stroke="#8e8e8a" stroke-width=".5"/><path d="M9.8 1.6C10.2 1 9.2 .6 8.8 1.4L6 9L7.4 9.4Z" fill="#e2e2e0" stroke="#8e8e8a" stroke-width=".5"/><rect x="2.2" y="9.4" width="4.2" height="3" rx="1.4" fill="#dfe8f6" stroke="#2f5fae" stroke-width="1.2"/><rect x="7.6" y="9.4" width="4.2" height="3" rx="1.4" fill="#dfe8f6" stroke="#2f5fae" stroke-width="1.2"/></svg>
<svg style="left:734.6px;top:52.2px" width="14" height="14" viewBox="0 0 14 14"><path d="M6.4 6.2H12L13 12.2H6.4Z" fill="#f0f0ec" stroke="#bdbdb8" stroke-width=".5"/><circle cx="5.4" cy="3.6" r="2.2" fill="#f09a2a"/><path d="M1.8 6.6H9V10.2H1.8Z" fill="#3560b0"/><path d="M4.4 6.6L5.4 8.2L6.4 6.6Z" fill="#e8e8f0"/></svg>
<svg style="left:628px;top:69.9px" width="14" height="14" viewBox="0 0 14 14"><path d="M2.4 2.6V12" stroke="#aaa" stroke-width=".5"/><rect x="1.4" y="1.6" width="2.2" height="2.2" fill="#f4f4f1" stroke="#999" stroke-width=".4"/><rect x="1.4" y="5.8" width="2.2" height="2.2" fill="#f4f4f1" stroke="#999" stroke-width=".4"/><rect x="1.4" y="10" width="2.2" height="2.2" fill="#f4f4f1" stroke="#999" stroke-width=".4"/><path d="M3.6 2.6C6.4 1.6 8 2.6 8.2 5" stroke="#bbb" stroke-width=".6" fill="none"/><path d="M8.6 4.2L10.6 7.4V9.4H6.6V7.4Z" fill="#e9cf2a" stroke="#a8901a" stroke-width=".4"/><rect x="6.8" y="9.4" width="3.6" height="3.2" fill="#3a68b4"/><path d="M8.6 5.6V8" stroke="#222" stroke-width=".6"/></svg>
<svg style="left:645.6px;top:69.9px" width="14" height="14" viewBox="0 0 14 14"><path d="M9.2 1.2C10.4 .4 12.4 2 11.6 3.6L10 5.2L8 3.2Z" fill="#1c2a48"/><path d="M8.2 3.2L10 5L4.8 11L2.8 11.6L3.2 9.6Z" fill="#4a7ac4" stroke="#2a4f8f" stroke-width=".5"/><path d="M6.4 5.8L7.6 7" stroke="#e6eefa" stroke-width="1.1"/><path d="M3 11.2L2.2 12.6" stroke="#2a4f8f" stroke-width="1.2" stroke-linecap="round"/></svg>
<svg style="left:663.4px;top:69.9px" width="14" height="14" viewBox="0 0 14 14"><path d="M8.6 9L12 12.2" stroke="#77736c" stroke-width="1.7" stroke-linecap="round"/><circle cx="6" cy="6" r="4.3" fill="#a9c4e6" stroke="#9a9a96" stroke-width="1"/><path d="M3.2 5C4 3.4 6 2.6 7.8 3.2" stroke="#d6e4f6" stroke-width=".8" fill="none"/></svg>
<svg style="left:681.2px;top:69.9px" width="14" height="14" viewBox="0 0 14 14"><path d="M7 1.4V4" stroke="#2f5fae" stroke-width="2"/><path d="M6.2 3.6L3 10.2L3.8 12.4L5.4 9.6L6.4 6.4ZM7.8 3.6L11 10.2L10.2 12.4L8.6 9.6L7.6 6.4Z" fill="#4a7ac4" stroke="#2a4f8f" stroke-width=".4"/><path d="M7 4.2V11" stroke="#777" stroke-width="1.1"/><circle cx="7" cy="5.4" r=".8" fill="#ddd"/></svg>
<svg style="left:699px;top:69.9px" width="14" height="14" viewBox="0 0 14 14"><path d="M7 1.2L9.2 3.8H7.9V6.1H10.2V4.8L12.8 7L10.2 9.2V7.9H7.9V10.2H9.2L7 12.8L4.8 10.2H6.1V7.9H3.8V9.2L1.2 7L3.8 4.8V6.1H6.1V3.8H4.8Z" fill="#3f72c0" stroke="#2a4f8f" stroke-width=".3"/></svg>
<svg style="left:716.8px;top:69.9px" width="14" height="14" viewBox="0 0 14 14"><rect x="3.2" y="4" width="7.8" height="6.2" rx="1.6" fill="#f0f0ee" stroke="#c2c2be" stroke-width=".6"/><path d="M7.1 1.2L7.9 2.2L7.1 3.2L6.3 2.2ZM7.1 11L7.9 12L7.1 13L6.3 12ZM1.6 6.1L2.6 7.1L1.6 8.1L.6 7.1ZM12.6 6.1L13.6 7.1L12.6 8.1L11.6 7.1Z" fill="#111"/></svg>
<svg style="left:734.6px;top:69.9px" width="14" height="14" viewBox="0 0 14 14"><path d="M1.8 11.8L8.6 5.4L11.6 1.2M1.8 11.8L6.4 9.4L12.8 3.8M8.6 5.4L6.4 9.4" stroke="#77736c" stroke-width=".8" fill="none"/><path d="M8.6 5.4L11.6 1.2L12.8 3.8L6.4 9.4Z" fill="#e9e9e6" opacity=".8"/></svg>
<svg style="left:628px;top:87.8px" width="14" height="14" viewBox="0 0 14 14"><rect x="2.6" y="2" width="6.4" height="6.4" fill="#3d6db6" transform="rotate(-18 6 5)"/><rect x="4.8" y="5" width="6.6" height="6.4" fill="#4a7ac4" stroke="#2a4f8f" stroke-width=".3" transform="rotate(24 8 8)"/><circle cx="2.6" cy="9.8" r="1.3" fill="#e8eef8" stroke="#3d6db6" stroke-width=".5"/><circle cx="11" cy="3.4" r="1.3" fill="#e8eef8" stroke="#3d6db6" stroke-width=".5"/></svg>
<svg style="left:645.6px;top:87.8px" width="14" height="14" viewBox="0 0 14 14"><rect x="3.6" y="3.4" width="9" height="8.6" fill="#3f70ba" stroke="#2a4f8f" stroke-width=".4"/><rect x="1" y="1" width="5.2" height="5" fill="#5b8bd0" stroke="#2a4f8f" stroke-width=".4"/><path d="M2 2L9.6 9.4" stroke="#e8eef8" stroke-width=".8"/><circle cx="9.6" cy="9.4" r="1" fill="#e8eef8"/><circle cx="2.2" cy="2.2" r=".9" fill="#e8eef8"/></svg>
<svg style="left:663.4px;top:87.8px" width="14" height="14" viewBox="0 0 14 14"><path d="M4.4 2H9.6L12.4 10.4H6.6Z" fill="#5b8bd0" stroke="#2a4f8f" stroke-width=".3"/><path d="M3 2H8.6V10.6H3Z" fill="#3f70ba" opacity=".85"/><circle cx="3.6" cy="11.2" r="1.4" fill="#e8eef8" stroke="#3d6db6" stroke-width=".5"/></svg>
<svg style="left:681.2px;top:87.8px" width="14" height="14" viewBox="0 0 14 14"><path d="M4.6 1.8H9.4L12.6 11.6H10.2L9.6 9.8H4.4L3.8 11.6H1.4Z" fill="#4a7ac4" stroke="#2a4f8f" stroke-width=".3"/><path d="M5.2 3H8.8L10.2 8.6H3.8Z" fill="#6e9ad8"/><circle cx="2.8" cy="11.6" r=".9" fill="#e8eef8"/><circle cx="11.2" cy="11.6" r=".9" fill="#e8eef8"/></svg>
<svg style="left:699px;top:87.8px" width="14" height="14" viewBox="0 0 14 14"><path d="M1.6 2.6L12.2 1.4V12.6L1.6 11.4Z" fill="#3668b8" stroke="#2a4f8f" stroke-width=".4"/><path d="M9.4 1.8L12.2 1.4V12.6L9.4 12.2Z" fill="#6e9ad8"/><path d="M4.6 7H9.6" stroke="#e8eef8" stroke-width=".8"/><path d="M4.8 5.4L3 7L4.8 8.6ZM9.4 5.4L11.2 7L9.4 8.6Z" fill="#e8eef8"/></svg>
<svg style="left:716.8px;top:87.8px" width="14" height="14" viewBox="0 0 14 14"><path d="M5.4 1.6H8.6L12.4 12H9.6L8.9 9.8H5.1L4.4 12H1.6Z" fill="#111"/><path d="M5.8 7.6H8.2L7 3.8Z" fill="#e4e4df"/><path d="M5.4 1.6H8.6L9.2 3.2H4.8Z" fill="#444"/></svg>
<svg style="left:734.6px;top:87.8px" width="14" height="14" viewBox="0 0 14 14"><path d="M4.2 4.8L9.8 2.4L12.6 8.8L7 11.4Z" fill="#ecece9" stroke="#8a8a86" stroke-width=".6"/><path d="M6.4 3.8C6 1.2 9.4 .2 10.2 2.6" stroke="#8a8a86" stroke-width=".7" fill="none"/><path d="M4.2 4.8C2.4 5 1.6 6.4 2 9.6C3.2 8.4 3.2 6.8 4.6 6.2Z" fill="#3d6db6"/><circle cx="8.4" cy="6.8" r=".9" fill="#777"/></svg>
<svg style="left:628px;top:105.8px" width="14" height="14" viewBox="0 0 14 14"><defs><linearGradient id="gb" x1="0" x2="1"><stop offset="0" stop-color="#4a4a4a"/><stop offset="1" stop-color="#f0f0f0"/></linearGradient></defs><rect x="2" y="2" width="10" height="10" fill="url(#gb)" stroke="#77736c" stroke-width=".6"/></svg>
<svg style="left:645.6px;top:105.8px" width="14" height="14" viewBox="0 0 14 14"><path d="M10 1.6L12.2 3.8L5 11.4L2 12.2L2.8 9.2Z" fill="#e9a83a" stroke="#9a6a1a" stroke-width=".4"/><path d="M10 1.6L12.2 3.8L11.2 4.8L9 2.6Z" fill="#e04a4a"/><path d="M2.8 9.2L5 11.4L2 12.2Z" fill="#e8d2a8"/><path d="M2 12.2L2.4 10.8L3.4 11.8Z" fill="#333"/><path d="M9.6 3.4L4 9.4" stroke="#f6d27a" stroke-width=".6"/></svg>
<svg style="left:663.4px;top:105.8px" width="14" height="14" viewBox="0 0 14 14"><path d="M11.2 1.2C12 1 12.6 1.6 12.2 2.4L8.2 8L6.8 6.8Z" fill="#b8682a" stroke="#7a3f12" stroke-width=".3"/><path d="M6.8 6.8L8.2 8L7 9.6L5.6 8.4Z" fill="#b8b8b8" stroke="#777" stroke-width=".3"/><path d="M5.6 8.4L7 9.6C6 11.8 3.6 12.6 1.6 12.4C3 11.6 4 10 5.6 8.4Z" fill="#1a1a1a"/></svg>
<svg style="left:681.2px;top:105.8px" width="14" height="14" viewBox="0 0 14 14"><path d="M4.6 3.4L11.6 3C12.6 3 13 3.8 12.6 4.6L10.4 9.6C10 10.4 9.4 10.8 8.6 10.8L2.6 11C1.4 11 1.2 10 1.6 9.2L3.2 4.6C3.4 3.8 3.8 3.4 4.6 3.4Z" fill="#ee6a72" stroke="#d84a55" stroke-width=".5"/><path d="M4.8 4.6L10.8 4.4L9 8.6L3.4 8.8Z" fill="#f5a2a6"/></svg>
<svg style="left:699px;top:105.8px" width="14" height="14" viewBox="0 0 14 14"><path d="M11.8 1.4C12.4 2 12.2 2.6 11.8 3L8.2 6.6L6.8 5.2L10.4 1.6C10.8 1.2 11.4 1 11.8 1.4Z" fill="#2a2f38"/><path d="M6.8 5.2L8.2 6.6L5.6 9.2L4.2 7.8Z" fill="#a9a9a4" stroke="#666" stroke-width=".3"/><path d="M4.6 6L9.4 10.6" stroke="#777" stroke-width=".7"/><path d="M4.4 8.8L1.6 12.4" stroke="#3d6db6" stroke-width="1" stroke-linecap="round"/><path d="M8.8 8.6H11.2V11.2" stroke="#999" stroke-width=".8" fill="none"/></svg>
<svg style="left:716.8px;top:105.8px" width="14" height="14" viewBox="0 0 14 14"><rect x="3.8" y="1.4" width="5" height="2" rx=".5" fill="#2a2f38"/><path d="M2.6 4.4C2.6 3.6 3.4 3.2 4.4 3.2H8.2C9.2 3.2 10 3.6 10 4.4V10.4C10 11.2 9.2 11.6 8.4 11.6H4.2C3.4 11.6 2.6 11.2 2.6 10.4Z" fill="#27364f"/><rect x="3.2" y="6" width="6.2" height="3.4" fill="#4a7ac4"/><path d="M9 10.6L12.6 12.6M11 9.6L12.6 12.6" stroke="#3d6db6" stroke-width=".9"/></svg>
<svg style="left:734.6px;top:105.8px" width="14" height="14" viewBox="0 0 14 14"><circle cx="7" cy="3.4" r="1.9" fill="#e6c88a" stroke="#a8803a" stroke-width=".5"/><path d="M6 5H8L8.6 7.4H5.4Z" fill="#d8b670" stroke="#a8803a" stroke-width=".4"/><rect x="2.4" y="7.4" width="9.2" height="4" rx=".8" fill="#d8b670" stroke="#9a7430" stroke-width=".5"/><path d="M3 10.2H11" stroke="#8a6a2a" stroke-width=".9"/></svg>
<svg style="left:628px;top:123.7px" width="14" height="14" viewBox="0 0 14 14"><g transform="rotate(45 7 7)" fill="#e3c618" stroke="#b89c0c" stroke-width=".6"><rect x=".8" y="4.6" width="12.4" height="4.8" rx="2.2"/><rect x="4.6" y=".8" width="4.8" height="12.4" rx="2.2"/></g><g transform="rotate(45 7 7)" fill="#e9cf2a"><rect x="1.4" y="5.2" width="11.2" height="3.6" rx="1.6"/><rect x="5.2" y="1.4" width="3.6" height="11.2" rx="1.6"/></g><circle cx="7" cy="7" r="1.5" fill="#f4e36a"/></svg>
<svg style="left:645.6px;top:123.7px" width="14" height="14" viewBox="0 0 14 14"><path d="M4 4.6L12.4 3.2L11.8 12.2L3.2 10.6Z" fill="#3f70ba" stroke="#2a4f8f" stroke-width=".4"/><circle cx="5.2" cy="2.6" r="1.7" fill="#e6c88a" stroke="#a8803a" stroke-width=".5"/><path d="M4.4 4H6L6.6 5.8H3.8Z" fill="#d8b670"/><rect x="1.6" y="5.6" width="7.4" height="3.4" rx=".7" fill="#d8b670" stroke="#9a7430" stroke-width=".5"/><path d="M2.2 8H8.4" stroke="#8a6a2a" stroke-width=".8"/></svg>
<svg style="left:663.4px;top:123.7px" width="14" height="14" viewBox="0 0 14 14"><path d="M7 2.2C8 4.6 10.6 6.6 10.6 8.8C10.6 10.8 9 12 7 12C5 12 3.4 10.8 3.4 8.8C3.4 6.6 6 4.6 7 2.2Z" fill="#7fa6dc" stroke="#5a82bc" stroke-width=".5"/><path d="M5.2 8C5.4 6.8 6.2 6 7 5" stroke="#dce8f8" stroke-width=".9" fill="none"/></svg>
<svg style="left:681.2px;top:123.7px" width="14" height="14" viewBox="0 0 14 14"><path d="M3 8.6C2.6 6 4.6 3.6 7.4 3.4C9.4 3.2 11 4.4 11 6.4C11 9.2 8.6 11.4 6 11.4L3.4 12.2C4 11 3.2 10 3 8.6Z" fill="#eec0a4" stroke="#c08a66" stroke-width=".5"/><path d="M8 3.2L10.6 1.6M9.4 4L12 2.8M10.4 5.4L12.6 4.8" stroke="#d8a27a" stroke-width=".8"/><path d="M5.6 6.4C6.6 5.8 8 6.2 8.2 7.6" stroke="#c08a66" stroke-width=".6" fill="none"/><path d="M3.4 12.2L6 11.4" stroke="#e08a2a" stroke-width=".9"/></svg>
<svg style="left:699px;top:123.7px" width="14" height="14" viewBox="0 0 14 14"><path d="M7.6 5.4L11.8 1.6" stroke="#3a3a3a" stroke-width="1.5" stroke-linecap="round"/><circle cx="5.6" cy="7.8" r="3.5" fill="#2c2c2c"/><path d="M3.6 6.6C4.2 5.6 5.2 5.2 6.2 5.4" stroke="#666" stroke-width=".7" fill="none"/></svg>
<div class="a" style="left:681.8px;top:149.4px;width:21.8px;height:14.8px;background:#fff;border:.5px solid #d8d8d2"></div>
<div class="a" style="left:673.6px;top:141.8px;width:20.6px;height:14.8px;background:#000"></div>
<div class="a" style="left:675.8px;top:160.6px;width:4.6px;height:4.4px;background:#fff;border:.4px solid #bbb"></div>
<div class="a" style="left:673.3px;top:158.7px;width:3.9px;height:3.6px;background:#000"></div>
<svg style="left:696.6px;top:140.6px" width="7" height="7" viewBox="0 0 7 7"><path d="M1 2.2L3 .6V1.6H5.4V4H6.4L4.8 6L3.2 4H4.2V2.8H3V3.8Z" fill="#f4f4f0" stroke="#888" stroke-width=".5"/></svg>
<div class="a" style="left:626.6px;top:165.4px;width:123.4px;height:0.9px;background:#f6f6f3"></div>
<div class="a" style="left:626.6px;top:166.3px;width:123.4px;height:0.5px;background:#cfcfc9"></div>
<div class="win" style="left:629.8px;top:176.8px;width:123.8px;height:196.4px"></div>
<div class="a" style="left:629.8px;top:176.8px;width:123.8px;height:14.2px;background:linear-gradient(rgba(140,140,140,.96),rgba(92,92,92,.96));border-radius:4px 4px 0 0;border-top:.5px solid #9a9a9a"></div>
<div class="t" style="left:631px;top:180.2px;font-size:7px;color:rgba(40,40,40,.42);font-style:italic;">You can drop dockable dialogs here</div>
<div class="a" style="left:633.5999999999999px;top:177.20000000000002px;width:13px;height:10.4px;border:.6px solid rgba(70,70,70,.55);border-top:none;border-radius:0 0 2.5px 2.5px;background:rgba(120,120,120,.35)"></div>
<svg style="left:637.3px;top:179.4px" width="5.6" height="5.6" viewBox="0 0 5.6 5.6"><path d="M.4 .4L5.2 5.2M5.2 .4L.4 5.2" stroke="#cdcdcd" stroke-width="1" fill="none"/></svg>
<div class="t" style="left:673.4px;top:178.4px;font-size:7.5px;color:#c9c9c9;font-weight:bold;letter-spacing:.1px;">Tool Options</div>
<div class="a" style="left:629.8px;top:191px;width:123.8px;height:3px;background:#eeeeea;border-bottom:.5px solid #d2d2cc"></div>
<div class="t" style="left:631.4px;top:196.3px;font-size:6.2px;color:#111;font-weight:bold;">Paintbrush</div>
<div class="a" style="left:744.2px;top:198px;width:6px;height:6px;border:.6px solid #8f8f89;border-radius:1px;background:#f1f1ed"></div>
<svg style="left:746px;top:199.6px" width="2.6" height="3" viewBox="0 0 2.6 3"><path d="M2.4 0L0 1.5L2.4 3Z" fill="#444"/></svg>
<div class="t" style="left:631.4px;top:208.9px;font-size:6.2px;">Mode:</div>
<div class="combo" style="left:658.2px;top:207.6px;width:94px;height:12.4px"></div>
<div class="t" style="left:662.4px;top:208.9px;font-size:6.2px;">Normal</div>
<div class="a" style="left:740.6px;top:209px;width:0.6px;height:9.6px;background:#c4c4bd"></div>
<svg style="left:744.8px;top:212.8px" width="3.6" height="2.232" viewBox="0 0 3.6 2.232"><path d="M0 0L1.8 2.16L3.6 0Z" fill="#222"/></svg>
<div class="t" style="left:631.4px;top:223.4px;font-size:6.2px;">Opacity:</div>
<div class="slider" style="left:658.8px;top:224.4px;width:60.8px;height:7.2px"></div>
<div class="knob" style="left:702px;top:224.4px;width:17.6px;height:7.2px"></div>
<svg style="left:708.4px;top:227.5px" width="5" height="1.2" viewBox="0 0 5 1.2"><path d="M0 .6h.9M1.9 .6h.9M3.8 .6h.9" stroke="#9a9a94" stroke-width=".7"/></svg>
<div class="entry" style="left:722.8px;top:222.6px;width:25px;height:11px"></div>
<div class="t" style="left:725px;top:223.4px;font-size:6.2px;">100.0</div>
<div class="a" style="left:747.4px;top:222.6px;width:5px;height:11px;background:linear-gradient(#ecece8,#deded8);border:.6px solid #bdbdb6;border-left:none;border-radius:0 1.5px 1.5px 0"></div>
<svg style="left:748.6px;top:224.45px" width="2.6" height="1.8" viewBox="0 0 2.6 1.8"><path d="M0 1.8L1.3 0L2.6 1.8Z" fill="#222"/></svg>
<svg style="left:748.6px;top:229.95px" width="2.6" height="1.8" viewBox="0 0 2.6 1.8"><path d="M0 0L1.3 1.8L2.6 0Z" fill="#222"/></svg>
<div class="t" style="left:631.4px;top:239.2px;font-size:6.2px;">Brush:</div>
<div class="a" style="left:659.4px;top:235.4px;width:16.4px;height:16.6px;background:linear-gradient(#f3f3f0,#e0e0da);border:.6px solid #b5b5ae;border-radius:1.5px"></div>
<div class="a" style="left:661.6px;top:237.6px;width:12px;height:12px;background:#fff"></div>
<svg style="left:664.4px;top:240.6px" width="6.4" height="6.4" viewBox="0 0 6.4 6.4"><circle cx="3.2" cy="3.2" r="3" fill="#000"/></svg>
<svg style="left:671px;top:247px" width="2.8" height="2.8" viewBox="0 0 2.8 2.8"><path d="M2.8 0V2.8H0Z" fill="#4a6af0"/></svg>
<div class="entry" style="left:677.8px;top:238.6px;width:76px;height:11.8px;border-right:none"></div>
<div class="t" style="left:680.6px;top:239.6px;font-size:6.2px;">Circle (11)</div>
<div class="t" style="left:631.4px;top:255.6px;font-size:6.2px;">Scale:</div>
<div class="slider" style="left:658.8px;top:257px;width:60.4px;height:6.8px"></div>
<div class="knob" style="left:688px;top:257px;width:16.4px;height:6.8px"></div>
<svg style="left:693.6px;top:259.9px" width="5" height="1.2" viewBox="0 0 5 1.2"><path d="M0 .6h.9M1.9 .6h.9M3.8 .6h.9" stroke="#9a9a94" stroke-width=".7"/></svg>
<div class="entry" style="left:722.8px;top:255px;width:25px;height:10.6px"></div>
<div class="t" style="left:725.6px;top:255.6px;font-size:6.2px;">1.00</div>
<div class="a" style="left:747.4px;top:255px;width:5px;height:10.6px;background:linear-gradient(#ecece8,#deded8);border:.6px solid #bdbdb6;border-left:none;border-radius:0 1.5px 1.5px 0"></div>
<svg style="left:748.6px;top:256.75px" width="2.6" height="1.8" viewBox="0 0 2.6 1.8"><path d="M0 1.8L1.3 0L2.6 1.8Z" fill="#222"/></svg>
<svg style="left:748.6px;top:262.05px" width="2.6" height="1.8" viewBox="0 0 2.6 1.8"><path d="M0 0L1.3 1.8L2.6 0Z" fill="#222"/></svg>
<div class="t" style="left:640.6px;top:270.6px;font-size:6.2px;">Brush Dynamics</div>
<div class="a" style="left:631px;top:284.4px;width:2.4px;height:5.4px;background:#3a3a3a"></div>
<div class="a" style="left:631px;top:299.4px;width:2.4px;height:5.4px;background:#3a3a3a"></div>
<div class="a" style="left:631px;top:314.0px;width:2.4px;height:5.4px;background:#3a3a3a"></div>
<div class="a" style="left:631px;top:326.79999999999995px;width:2.4px;height:5.4px;background:#3a3a3a"></div>
<div class="a" style="left:631px;top:338px;width:3px;height:34px;background:#f2f2ee;border-left:.6px solid #9c9c96"></div>
<div class="win" style="left:633.7px;top:265.2px;width:122.2px;height:191.8px"></div>
<div class="a" style="left:633.7px;top:265.2px;width:122.2px;height:14.4px;background:linear-gradient(rgba(140,140,140,.95),rgba(92,92,92,.95));border-radius:4px 4px 0 0;border-top:.5px solid #9a9a9a"></div>
<div class="a" style="left:638.1px;top:265.59999999999997px;width:12px;height:10.4px;border:.6px solid rgba(70,70,70,.55);border-top:none;border-radius:0 0 2.5px 2.5px;background:rgba(120,120,120,.35)"></div>
<svg style="left:641.3px;top:267.8px" width="5.6" height="5.6" viewBox="0 0 5.6 5.6"><path d="M.4 .4L5.2 5.2M5.2 .4L.4 5.2" stroke="#cdcdcd" stroke-width="1" fill="none"/></svg>
<div class="t" style="left:687.8px;top:267.3px;font-size:7.5px;color:#c9c9c9;font-weight:bold;letter-spacing:.1px;">Layers</div>
<div class="a" style="left:633.7px;top:279.6px;width:122.2px;height:3px;background:#eeeeea;border-bottom:.5px solid #d2d2cc"></div>
<div class="t" style="left:640.6px;top:270.6px;font-size:6.2px;color:rgba(25,25,25,.5);">Brush Dynamics</div>
<div class="t" style="left:635.3px;top:285.4px;font-size:6.2px;color:#111;font-weight:bold;">Layers</div>
<div class="a" style="left:745.6px;top:287.2px;width:6.2px;height:6.2px;border:.6px solid #8f8f89;border-radius:1px;background:#f1f1ed"></div>
<svg style="left:747.4px;top:288.8px" width="2.6" height="3" viewBox="0 0 2.6 3"><path d="M2.4 0L0 1.5L2.4 3Z" fill="#444"/></svg>
<div class="t" style="left:635.3px;top:297.8px;font-size:6.2px;">Mode:</div>
<div class="combo" style="left:662.6px;top:296.6px;width:91.8px;height:12.2px"></div>
<div class="t" style="left:666.4px;top:297.8px;font-size:6.2px;">Normal</div>
<div class="a" style="left:741.6px;top:298px;width:0.6px;height:9.4px;background:#c4c4bd"></div>
<svg style="left:746px;top:301.6px" width="3.6" height="2.232" viewBox="0 0 3.6 2.232"><path d="M0 0L1.8 2.16L3.6 0Z" fill="#222"/></svg>
<div class="t" style="left:635.3px;top:312.5px;font-size:6.2px;">Opacity:</div>
<div class="slider" style="left:663.4px;top:313.8px;width:57.4px;height:6.8px"></div>
<div class="knob" style="left:704px;top:313.8px;width:16.8px;height:6.8px"></div>
<svg style="left:710px;top:316.7px" width="5" height="1.2" viewBox="0 0 5 1.2"><path d="M0 .6h.9M1.9 .6h.9M3.8 .6h.9" stroke="#9a9a94" stroke-width=".7"/></svg>
<div class="entry" style="left:724.6px;top:311.8px;width:24.4px;height:11px"></div>
<div class="t" style="left:726.6px;top:312.5px;font-size:6.2px;">100.0</div>
<div class="a" style="left:748.6px;top:311.8px;width:5px;height:11px;background:linear-gradient(#ecece8,#deded8);border:.6px solid #bdbdb6;border-left:none;border-radius:0 1.5px 1.5px 0"></div>
<svg style="left:749.8000000000001px;top:313.65000000000003px" width="2.6" height="1.8" viewBox="0 0 2.6 1.8"><path d="M0 1.8L1.3 0L2.6 1.8Z" fill="#222"/></svg>
<svg style="left:749.8000000000001px;top:319.15000000000003px" width="2.6" height="1.8" viewBox="0 0 2.6 1.8"><path d="M0 0L1.3 1.8L2.6 0Z" fill="#222"/></svg>
<div class="t" style="left:635.3px;top:324.8px;font-size:6.2px;">Lock:</div>
<div class="a" style="left:663.4px;top:326.2px;width:6px;height:6.2px;background:#fff;border:.7px solid #77736c;border-right-color:#cfcfc9;border-bottom-color:#cfcfc9"></div>
<svg style="left:673.2px;top:325.2px" width="8.6" height="8.6" viewBox="0 0 8.6 8.6"><defs><pattern id="ck" width="4.4" height="4.4" patternUnits="userSpaceOnUse"><rect width="4.4" height="4.4" fill="#9c9c9c"/><rect width="2.2" height="2.2" fill="#686868"/><rect x="2.2" y="2.2" width="2.2" height="2.2" fill="#686868"/></pattern></defs><rect width="8.6" height="8.6" fill="url(#ck)"/></svg>
<div class="a" style="left:636.2px;top:335.2px;width:108.2px;height:92px;background:#fff;border:.6px solid #9c9c96"></div>
<div class="a" style="left:636.8px;top:335.8px;width:107px;height:24px;background:#446a82"></div>
<svg style="left:641.2px;top:346.3px" width="8" height="5.6" viewBox="0 0 8 5.6"><path d="M.4 2.8C1.8 .6 6.2 .6 7.6 2.8C6.2 5 1.8 5 .4 2.8Z" fill="#f4f4f0" stroke="#6a6a66" stroke-width=".55"/><circle cx="4.2" cy="2.8" r="1.6" fill="#3a5a9a"/><circle cx="4.2" cy="2.8" r=".75" fill="#0a0a1a"/></svg>
<svg style="left:673px;top:339.1px" width="20" height="20" viewBox="0 0 20 20"><rect x=".5" y=".5" width="19" height="19" rx="1" fill="url(#ck)" stroke="#ecece9" stroke-width="1.1"/></svg>
<div class="t" style="left:694.9px;top:344.3px;font-size:6.3px;color:#111;">louvres.png</div>
<svg style="left:641.2px;top:368.59999999999997px" width="8" height="5.6" viewBox="0 0 8 5.6"><path d="M.4 2.8C1.8 .6 6.2 .6 7.6 2.8C6.2 5 1.8 5 .4 2.8Z" fill="#f4f4f0" stroke="#6a6a66" stroke-width=".55"/><circle cx="4.2" cy="2.8" r="1.6" fill="#3a5a9a"/><circle cx="4.2" cy="2.8" r=".75" fill="#0a0a1a"/></svg>
<svg style="left:673px;top:361.4px" width="20" height="20" viewBox="0 0 20 20"><rect x=".5" y=".5" width="19" height="19" rx="1" fill="url(#ck)" stroke="#111" stroke-width="1.1"/></svg>
<div class="t" style="left:694.9px;top:366.6px;font-size:6.3px;color:#111;">cockpit.png</div>
<svg style="left:641.2px;top:390.9px" width="8" height="5.6" viewBox="0 0 8 5.6"><path d="M.4 2.8C1.8 .6 6.2 .6 7.6 2.8C6.2 5 1.8 5 .4 2.8Z" fill="#f4f4f0" stroke="#6a6a66" stroke-width=".55"/><circle cx="4.2" cy="2.8" r="1.6" fill="#3a5a9a"/><circle cx="4.2" cy="2.8" r=".75" fill="#0a0a1a"/></svg>
<svg style="left:673px;top:383.7px" width="20" height="20" viewBox="0 0 20 20"><rect x=".5" y=".5" width="19" height="19" rx="1" fill="url(#ck)" stroke="#111" stroke-width="1.1"/></svg>
<div class="t" style="left:694.9px;top:388.9px;font-size:6.3px;color:#111;">access-hatch.pr</div>
<svg style="left:641.2px;top:413.2px" width="8" height="5.6" viewBox="0 0 8 5.6"><path d="M.4 2.8C1.8 .6 6.2 .6 7.6 2.8C6.2 5 1.8 5 .4 2.8Z" fill="#f4f4f0" stroke="#6a6a66" stroke-width=".55"/><circle cx="4.2" cy="2.8" r="1.6" fill="#3a5a9a"/><circle cx="4.2" cy="2.8" r=".75" fill="#0a0a1a"/></svg>
<div class="a" style="left:672.8px;top:405.8px;width:20.4px;height:20.2px;background:#060606;border:1.1px solid #111;border-radius:1px"></div>
<svg style="left:672.8px;top:405.8px" width="20.4" height="20.2" viewBox="0 0 20.4 20.2"><path d="M3.4 4.4L5.8 3L11.6 6.2L5.8 9.2L3.4 8.2L3.6 6.8L5 6.2L3.5 5.6Z" fill="#8bb591"/><path d="M5.8 3L14 6.2L5.8 9.2L5 6.2Z" fill="#c5c184"/><path d="M3.6 14.2L10.6 10.6L14 12.2L14.2 16.2L10.6 17.8Z" fill="#c5c184"/><path d="M10.6 10.6L14 12.2V16.2L10.6 17.8L11.4 14.2ZM16.6 11.6L18 14.2L16.6 17Z" fill="#8bb591"/></svg>
<div class="t" style="left:694.9px;top:411.2px;font-size:6.3px;color:#111;">Background</div>
<div class="a" style="left:744.4px;top:337px;width:1.6px;height:90px;background:#e4e4df"></div>
<div class="a" style="left:746.2px;top:337px;width:7.2px;height:90px;background:#d6d6d0;border:.6px solid #bcbcb5;border-radius:1px"></div>
<div class="a" style="left:746.2px;top:337px;width:7.2px;height:6.4px;background:linear-gradient(90deg,#f0f0ec,#deded8);border:.6px solid #b4b4ad;border-radius:1px"></div>
<div class="a" style="left:746.2px;top:420.6px;width:7.2px;height:6.4px;background:linear-gradient(90deg,#f0f0ec,#deded8);border:.6px solid #b4b4ad;border-radius:1px"></div>
<div class="a" style="left:746.2px;top:343.4px;width:7.2px;height:66px;background:linear-gradient(90deg,#eeeeea,#dcdcd6);border:.6px solid #b9b9b2;border-radius:1px"></div>
<svg style="left:748.2px;top:339.2px" width="3.2" height="2.2" viewBox="0 0 3.2 2.2"><path d="M0 2.2L1.6 0L3.2 2.2Z" fill="#222"/></svg>
<svg style="left:748.2px;top:422.8px" width="3.2" height="2.2" viewBox="0 0 3.2 2.2"><path d="M0 0L1.6 2.2L3.2 0Z" fill="#222"/></svg>
<svg style="left:749.2px;top:373px" width="1.2" height="5" viewBox="0 0 1.2 5"><path d="M.6 0v.9M.6 1.9v.9M.6 3.8v.9" stroke="#9a9a94" stroke-width=".7"/></svg>
<div class="a" style="left:636.2px;top:430.4px;width:108.2px;height:6.4px;background:#d6d6d0;border:.6px solid #bcbcb5;border-radius:1px"></div>
<div class="a" style="left:636.2px;top:430.4px;width:6.2px;height:6.4px;background:linear-gradient(#f0f0ec,#deded8);border:.6px solid #b4b4ad;border-radius:1px"></div>
<div class="a" style="left:738.2px;top:430.4px;width:6.2px;height:6.4px;background:linear-gradient(#f0f0ec,#deded8);border:.6px solid #b4b4ad;border-radius:1px"></div>
<div class="a" style="left:642.4px;top:430.4px;width:85px;height:6.4px;background:linear-gradient(#eeeeea,#dcdcd6);border:.6px solid #b9b9b2;border-radius:1px"></div>
<svg style="left:638.2px;top:432px" width="2.2" height="3.2" viewBox="0 0 2.2 3.2"><path d="M2.2 0L0 1.6L2.2 3.2Z" fill="#999"/></svg>
<svg style="left:740.4px;top:432px" width="2.2" height="3.2" viewBox="0 0 2.2 3.2"><path d="M0 0L2.2 1.6L0 3.2Z" fill="#222"/></svg>
<svg style="left:682px;top:433px" width="5" height="1.2" viewBox="0 0 5 1.2"><path d="M0 .6h.9M1.9 .6h.9M3.8 .6h.9" stroke="#9a9a94" stroke-width=".7"/></svg>
<svg style="left:639.6px;top:440.6px" width="10" height="10" viewBox="0 0 10 10"><path d="M1 1.6H6.4L8 3.2V9.4H1Z" fill="#f6f6f3" stroke="#9a9a94" stroke-width=".6"/><circle cx="7" cy="2.6" r="2" fill="#f6e25a"/><circle cx="7" cy="2.6" r="1" fill="#fff7b0"/></svg>
<svg style="left:660px;top:441.0px" width="9" height="9.4" viewBox="0 0 9 9.4"><path d="M4.4 .4L8.6 5H6.2V9H2.6V5H.2Z" fill="#3f72c0" stroke="#2a4f8f" stroke-width=".4"/></svg>
<svg style="left:680px;top:441.0px" width="9" height="9.4" viewBox="0 0 9 9.4"><path d="M4.4 9L8.6 4.4H6.2V.4H2.6V4.4H.2Z" fill="#3f72c0" stroke="#2a4f8f" stroke-width=".4"/></svg>
<svg style="left:700px;top:441.0px" width="9.4" height="9.4" viewBox="0 0 9.4 9.4"><rect x=".8" y=".8" width="5.6" height="5.2" fill="#4a5f8f" stroke="#3a4a70" stroke-width=".5"/><rect x="3" y="3.2" width="5.6" height="5.2" fill="#8798b8" stroke="#56668c" stroke-width=".5"/><rect x="1.6" y="1.6" width="2.6" height="1.4" fill="#a9b8d8"/></svg>
<svg style="left:719.6px;top:440.6px" width="9" height="10" viewBox="0 0 9 10"><circle cx="4.5" cy="1.8" r="1.2" fill="none" stroke="#8f8f8a" stroke-width=".8"/><path d="M4.5 3V9M2.4 4.4H6.6M.8 5.6C1 8 2.8 9 4.5 9C6.2 9 8 8 8.2 5.6" stroke="#8f8f8a" stroke-width="1" fill="none"/></svg>
<svg style="left:740px;top:440.6px" width="9.6" height="10.4" viewBox="0 0 9.6 10.4"><ellipse cx="4.8" cy="2.4" rx="4" ry="1.6" fill="#d8d8d4" stroke="#555" stroke-width=".6"/><path d="M1 3.2L1.8 9.2C2.6 10.2 7 10.2 7.8 9.2L8.6 3.2" fill="#b9b9b4" stroke="#555" stroke-width=".6"/><path d="M3 4.6V9M4.8 4.8V9.2M6.6 4.6V9" stroke="#666" stroke-width=".6"/><ellipse cx="4.8" cy="2.4" rx="2.4" ry=".8" fill="#333"/></svg>
</body></html>
